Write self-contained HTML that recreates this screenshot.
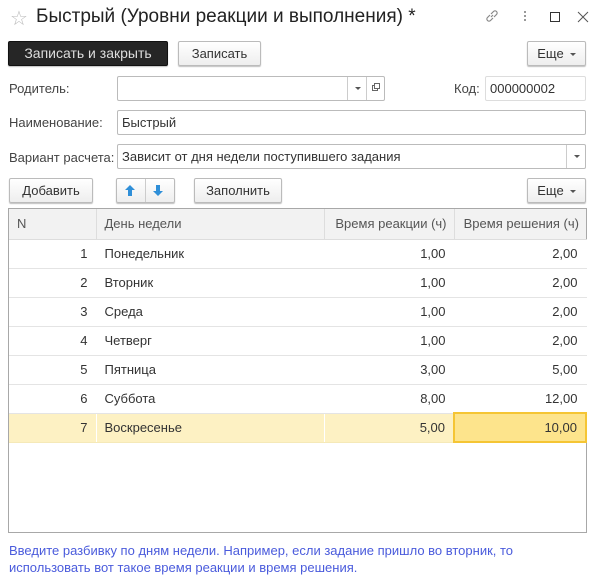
<!DOCTYPE html>
<html><head><meta charset="utf-8"><style>
*{box-sizing:border-box;margin:0;padding:0}
body{width:602px;height:580px;background:#fff;font-family:"Liberation Sans",Arial,sans-serif;font-size:13px;color:#333;position:relative;overflow:hidden}
.a{position:absolute}
.btn{position:absolute;height:25px;border:1px solid #bbb;border-radius:2px;background:linear-gradient(#fff,#eee);box-shadow:0 1px 1px rgba(0,0,0,.25);text-align:center;line-height:23px;color:#333;font-size:13px}
.inp{position:absolute;height:25px;border:1px solid #bbb;border-radius:2px;background:#fff;line-height:23px;padding-left:4px;color:#333}
.lbl{position:absolute;color:#444;font-size:13px}
.dd{position:absolute;top:0;right:0;width:19px;height:23px;border-left:1px solid #ccc}
.dd:after{content:"";position:absolute;left:7px;top:10px;border-left:3px solid transparent;border-right:3px solid transparent;border-top:3px solid #555}
.car{display:inline-block;margin-left:6px;vertical-align:middle;border-left:3px solid transparent;border-right:3px solid transparent;border-top:3px solid #555}
table{position:absolute;left:9px;top:209px;width:577px;border-collapse:collapse;font-size:13px;table-layout:fixed}
td{height:29px;border-bottom:1px solid #e4e4e4;border-right:1px solid #fff;padding:0 8px;white-space:nowrap}
th{height:30px;background:#f2f2f2;font-weight:normal;color:#555;text-align:left;padding:0 8px;border-right:1px solid #ddd;border-bottom:1px solid #ddd;white-space:nowrap;overflow:hidden}
th.r{padding:0 7px 0 4px}
.r{text-align:right}
tr.sel td{background:#fdf1c3;border-bottom:1px solid #f5e9b8}
tr.sel td.cur{background:#fde48c;border:2px solid #f5c534}
</style></head><body>
<div class="a" style="left:10px;top:6px;font-size:20px;color:#bbb">☆</div>
<div class="a" style="left:36px;top:6px;font-size:19px;color:#222">Быстрый (Уровни реакции и выполнения) *</div>
<svg class="a" style="left:484px;top:8px" width="16" height="16" viewBox="0 0 16 16" fill="none" stroke="#888" stroke-width="1.2"><path d="M7 9l2-2M6 7L3.5 9.5a2 2 0 0 0 3 3L9 10M10 9l2.5-2.5a2 2 0 0 0-3-3L7 6"/></svg>
<div class="a" style="left:524px;top:11px;width:2px;height:2px;background:#999;box-shadow:0 4px #999,0 8px #999"></div>
<div class="a" style="left:550px;top:12px;width:10px;height:10px;border:1px solid #333"></div>
<svg class="a" style="left:577px;top:11px" width="12" height="12" viewBox="0 0 12 12" stroke="#555" stroke-width="1"><path d="M1 1L11 11M11 1L1 11"/></svg>

<div class="btn" style="left:8px;top:41px;width:160px;background:#262626;border-color:#111;color:#ddd;font-size:14px">Записать и закрыть</div>
<div class="btn" style="left:178px;top:41px;width:83px">Записать</div>
<div class="btn" style="left:527px;top:41px;width:59px">Еще<span class="car"></span></div>

<div class="lbl" style="left:9px;top:81px">Родитель:</div>
<div class="inp" style="left:117px;top:76px;width:268px;"><div class="dd" style="right:18px"></div><div style="position:absolute;right:0;top:0;width:18px;height:23px;border-left:1px solid #ccc"><div style="position:absolute;left:5px;top:8px;width:6px;height:6px;border:1px solid #666"></div><div style="position:absolute;left:7px;top:6px;width:6px;height:6px;border:1px solid #666;background:#fff"></div></div></div>
<div class="lbl" style="left:454px;top:81px">Код:</div>
<div class="inp" style="left:485px;top:76px;width:101px;border-color:#ddd">000000002</div>

<div class="lbl" style="left:9px;top:115px">Наименование:</div>
<div class="inp" style="left:117px;top:110px;width:469px">Быстрый</div>

<div class="lbl" style="left:9px;top:150px">Вариант расчета:</div>
<div class="inp" style="left:117px;top:144px;width:469px">Зависит от дня недели поступившего задания<div class="dd"></div></div>

<div class="btn" style="left:9px;top:178px;width:84px">Добавить</div>
<div class="btn" style="left:116px;top:178px;width:59px"><div style="position:absolute;left:28px;top:0;width:1px;height:23px;background:#ccc"></div>
<svg class="a" style="left:7px;top:5px" width="12" height="13" viewBox="0 0 12 13"><path d="M6 1L1 6h3v6h4V6h3z" fill="#2f8fd8"/></svg>
<svg class="a" style="left:35px;top:5px" width="12" height="13" viewBox="0 0 12 13"><path d="M6 12L1 7h3V1h4v6h3z" fill="#2f8fd8"/></svg></div>
<div class="btn" style="left:194px;top:178px;width:88px">Заполнить</div>
<div class="btn" style="left:527px;top:178px;width:59px">Еще<span class="car"></span></div>

<div class="a" style="left:8px;top:208px;width:579px;height:325px;border:1px solid #a8a8a8"></div>
<table>
<colgroup><col style="width:87px"><col style="width:228px"><col style="width:130px"><col style="width:132px"></colgroup>
<tr><th>N</th><th>День недели</th><th class="r">Время реакции (ч)</th><th class="r" style="border-right:none">Время решения (ч)</th></tr>
<tr><td class="r">1</td><td>Понедельник</td><td class="r">1,00</td><td class="r">2,00</td></tr>
<tr><td class="r">2</td><td>Вторник</td><td class="r">1,00</td><td class="r">2,00</td></tr>
<tr><td class="r">3</td><td>Среда</td><td class="r">1,00</td><td class="r">2,00</td></tr>
<tr><td class="r">4</td><td>Четверг</td><td class="r">1,00</td><td class="r">2,00</td></tr>
<tr><td class="r">5</td><td>Пятница</td><td class="r">3,00</td><td class="r">5,00</td></tr>
<tr><td class="r">6</td><td>Суббота</td><td class="r">8,00</td><td class="r">12,00</td></tr>
<tr class="sel"><td class="r" style="height:27px">7</td><td>Воскресенье</td><td class="r">5,00</td><td class="r cur">10,00</td></tr>
</table>

<div class="a" style="left:9px;top:542px;font-size:13px;color:#4a5bdc;line-height:17px">Введите разбивку по дням недели. Например, если задание пришло во вторник, то<br>использовать вот такое время реакции и время решения.</div>
</body></html>
